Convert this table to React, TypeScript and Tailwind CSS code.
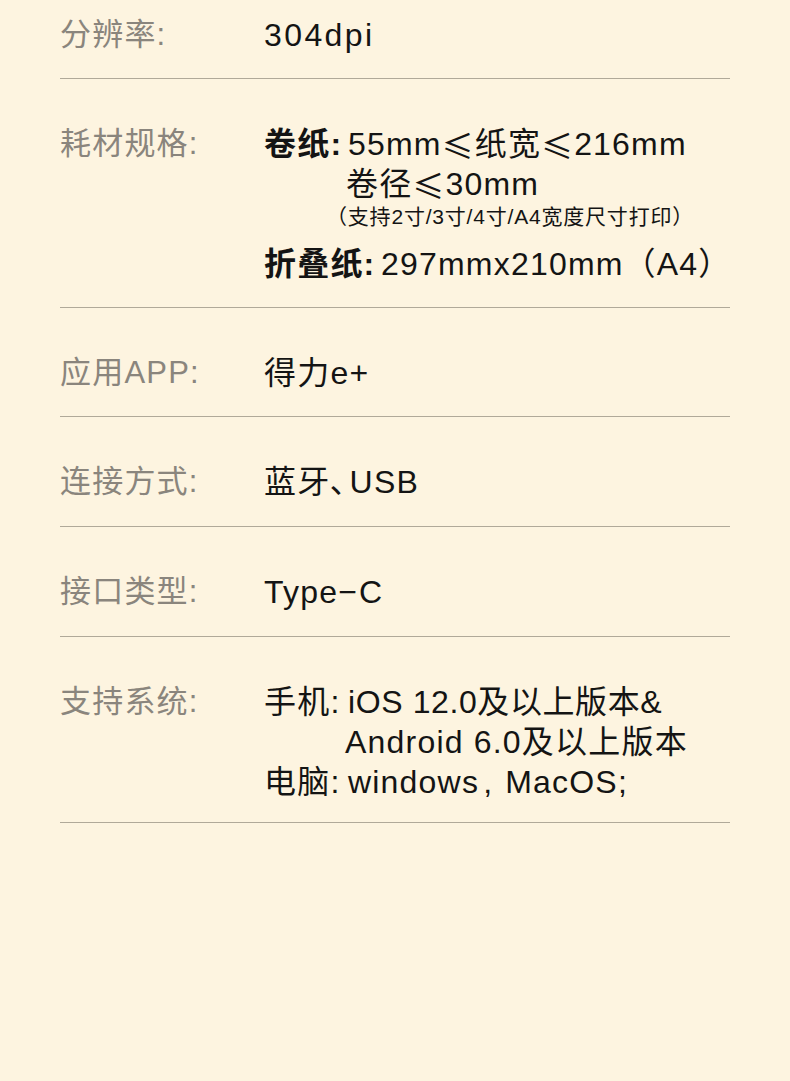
import React from "react";

const font = {
  fontFamily: '"Liberation Sans", "Noto Sans CJK SC", sans-serif',
};

function Le() {
  return (
    <span
      className="inline-block align-top h-[40px] leading-[40px] w-[33px] text-center"
      style={{ fontFamily: '"Noto Sans CJK SC", sans-serif' }}
    >
      ≤
    </span>
  );
}

function Row({
  label,
  children,
  className = "",
}: {
  label: string;
  children: React.ReactNode;
  className?: string;
}) {
  return (
    <div className={`flex border-b border-[#b0a999] ${className}`}>
      <div className="w-[204px] shrink-0 text-[31px] leading-[40px] text-[#8a857d] tracking-[1.2px]">
        {label}
      </div>
      <div className="flex-1 text-[32px] leading-[40px] text-[#141414] tracking-[1.2px]">
        {children}
      </div>
    </div>
  );
}

export default function App() {
  return (
    <div
      className="w-[790px] h-[1081px] bg-[#fdf4e0] px-[60px] overflow-hidden"
      style={font}
    >
      <Row label="分辨率:" className="pt-[15px] pb-[23px]">
        <span className="tracking-[2.4px]">304dpi</span>
      </Row>
      <Row label="耗材规格:" className="pt-[45px] pb-[23px]">
        <div className="flex">
          <span className="font-bold w-[84px] shrink-0">卷纸:</span>
          <div>
            <div className="h-[40px]">
              55mm<Le />纸宽<Le />216mm
            </div>
            <div className="h-[40px] -ml-[2px]">
              卷径<Le />30mm
            </div>
          </div>
        </div>
        <div className="text-[21px] leading-[26px] ml-[62px] tracking-[0.8px]">
          （支持2寸/3寸/4寸/A4宽度尺寸打印）
        </div>
        <div className="mt-[14px] flex">
          <span className="font-bold w-[117px] shrink-0">折叠纸:</span>
          <span>297mmx210mm（A4）</span>
        </div>
      </Row>
      <Row label="应用APP:" className="pt-[45px] pb-[23px]">
        得力e+
      </Row>
      <Row label="连接方式:" className="pt-[45px] pb-[24px]">
        蓝牙<span className="mr-[2px]">､</span>USB
      </Row>
      <Row label="接口类型:" className="pt-[45px] pb-[24px]">
        Type<span className="tracking-[2px]">−</span>C
      </Row>
      <Row label="支持系统:" className="pt-[45px] pb-[20px]">
        <div className="flex">
          <span className="w-[84px] shrink-0">手机:</span>
          <div className="tracking-[0.6px]">
            <div>iOS 12.0及以上版本&amp;</div>
            <div className="-ml-[3px] tracking-[1.2px]">Android 6.0及以上版本</div>
          </div>
        </div>
        <div className="flex">
          <span className="w-[84px] shrink-0">电脑:</span>
          <span>
            windows<span className="ml-[4px] mr-[12px]">,</span>MacOS;
          </span>
        </div>
      </Row>
    </div>
  );
}
